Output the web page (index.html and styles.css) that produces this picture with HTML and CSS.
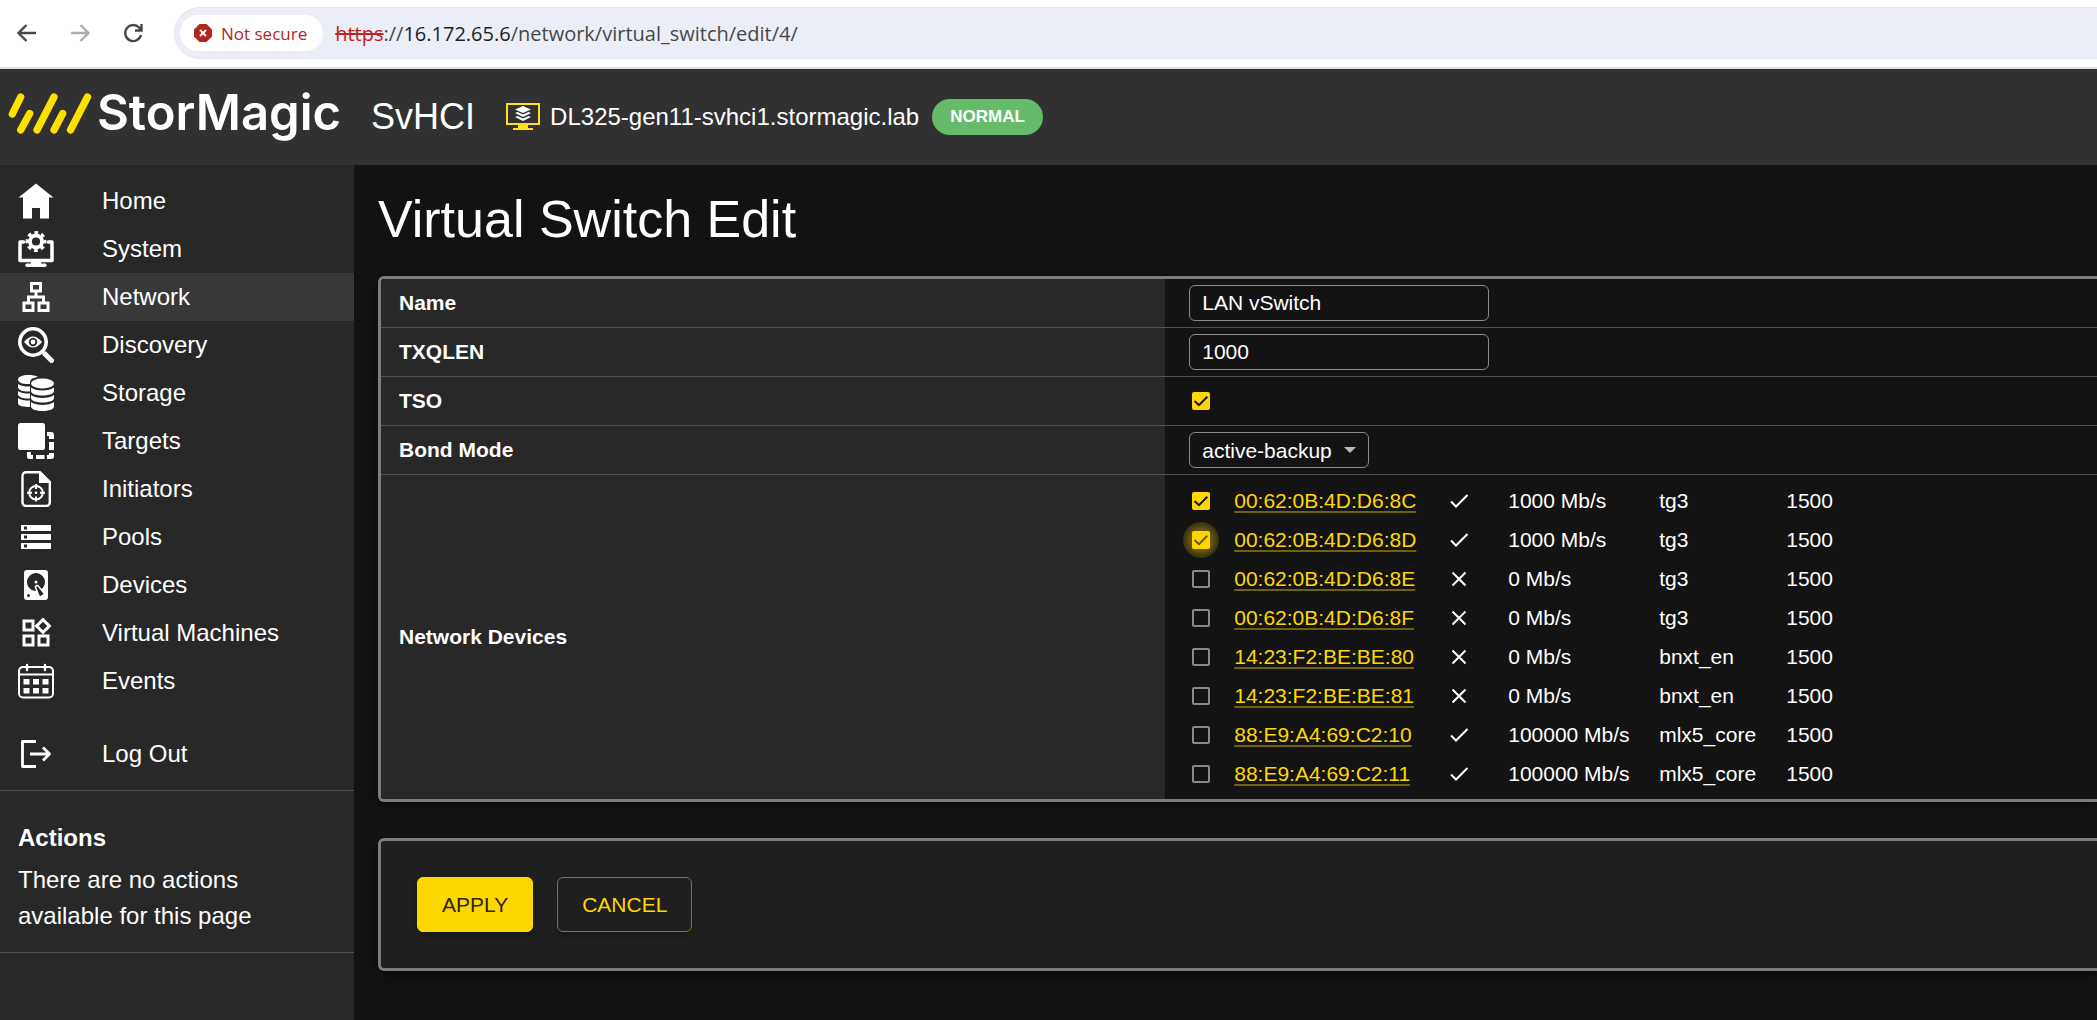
FILE: index.html
```html
<!DOCTYPE html>
<html lang="en">
<head>
<meta charset="utf-8">
<meta name="viewport" content="width=device-width, initial-scale=1">
<title>Virtual Switch Edit</title>
<link rel="stylesheet" href="styles.css">
</head>
<body>
<div class="toolbar">
  <button class="tool" type="button" aria-label="Back"><svg viewBox="0 0 24 24"><path d="M21 12H4M11.500 4L3.500 12l8 8"/></svg></button>
  <button class="tool tool-off" type="button" aria-label="Forward"><svg viewBox="0 0 24 24"><path d="M3 12h17M12.500 4l8 8-8 8"/></svg></button>
  <button class="tool" type="button" aria-label="Reload"><svg viewBox="0 0 24 24"><path d="M20 14a8 8 0 1 1-2-7.500l2.500 2.500M20.500 3v6.500H14"/></svg></button>
  <div class="omnibox">
    <button class="chip" type="button">
      <svg viewBox="0 0 18 18"><path fill="#b3261e" d="M5.500 0h7L18 5.500v7L12.500 18h-7L0 12.500v-7z"/><path stroke="#fff" stroke-width="2" d="M6 6l6 6M12 6l-6 6"/></svg>
      Not secure
    </button>
    <div class="url"><s>https</s>://<b>16.172.65.6</b>/network/virtual_switch/edit/4/</div>
  </div>
</div>

<header class="header">
  <div class="brand">
    <svg class="bars" viewBox="0 0 86 41"><path d="M12.700 4L4.300 21M21.700 20.500L12.700 37M46 4L29 37M54.700 20.500L46 37M79.500 4L62.500 37"/></svg>
    <span class="brand-name">StorMagic</span>
  </div>
  <span class="product">SvHCI</span>
  <div class="host">
    <svg class="host-icon" viewBox="0 0 36 30"><path fill="none" stroke="#ffe11a" stroke-width="2" d="M2 2h32v20H2z"/><path fill="#ffe11a" d="M13 22h10v4h5v2H8v-2h5z"/><path fill="#fff" d="M18 4l8 3.500-8 3.500-8-3.500zM10 11l2.500-1 5.500 2.500L23.500 10l2.500 1-8 4zM10 15l2.500-1 5.500 2.500 5.500-2.500 2.500 1-8 4z"/></svg>
    <span>DL325-gen11-svhci1.stormagic.lab</span>
    <span class="badge">NORMAL</span>
  </div>
</header>

<div class="layout">
  <aside class="sidebar">
    <nav class="nav">
      <a href="#"><svg viewBox="0 0 36 36"><path d="M18 .500L35.500 14.500H31v21h-9V25h-8v10.500H5v-21H.500z"/></svg>Home</a>
      <a href="#"><svg viewBox="0 0 36 36"><path class="line" stroke-width="3.500" stroke-linecap="round" stroke-linejoin="round" d="M5.500 11H2v18.500h32V11h-3.500"/><path d="M13 30h10v2.500h4a1.700 1.700 0 0 1 0 3.500H9a1.700 1.700 0 0 1 0-3.500h4z"/><circle class="line" cx="18" cy="10.500" r="6" stroke-width="3.800"/><circle class="line" cx="18" cy="10.500" r="8.500" stroke-width="4" stroke-dasharray="3.600 3.076" stroke-dashoffset="1.800"/></svg>System</a>
      <a href="#" class="active" aria-current="page"><svg viewBox="0 0 24 24"><path d="M13 22h8v-7h-3v-4h-5V9h3V2H8v7h3v2H6v4H3v7h8v-7H8v-2h8v2h-3zM10 7V4h4v3zM9 17v3H5v-3zM19 17v3h-4v-3z"/></svg>Network</a>
      <a href="#"><svg viewBox="0 0 36 36"><circle class="line" cx="15" cy="15" r="13.200" stroke-width="3.600"/><path class="line" stroke-width="5" stroke-linecap="round" d="M27 27l6.500 6.500"/><path fill-rule="evenodd" d="M6 15q9-11 18 0-9 11-18 0zM15 10.800a4.200 4.200 0 1 0 .1 0z"/><circle cx="15" cy="15" r="2.400"/></svg>Discovery</a>
      <a href="#"><svg viewBox="0 0 36 36"><path d="M0 4.500C0 1.500 5 0 10 0c4 0 8 .600 10 2-5 .500-8 2.500-8 5.500v1.500C6 9.500 0 8 0 4.500zM0 9c3 2 7 2.600 12 2.500v5C6 17 0 15 0 12.500zM0 16c3 2 7 2.600 12 2.500v5C6 24 0 22 0 19.500zM0 23c3 2 7 2.600 12 2.500v6.500C6 32 0 31 0 28.500z"/><ellipse cx="24.500" cy="8.500" rx="11.500" ry="5"/><path d="M13 12.500c5 4 18 4 23 0v3.500c0 6-23 6-23 0zM13 20c5 4 18 4 23 0v3c0 6-23 6-23 0zM13 27c5 4 18 4 23 0v4.500c0 6-23 6-23 0z"/></svg>Storage</a>
      <a href="#"><svg viewBox="0 0 36 36"><rect width="27" height="27" rx="2.500"/><path d="M29 9h4.500Q36 9 36 12v4h-5v-3h-2zM31 19h5v8h-5zM31 30h5v3.500Q36 36 33 36h-4v-4h2zM18 32h8.500v4H18zM9 29h4v3h2v4h-3.500Q9 36 9 33.500z"/></svg>Targets</a>
      <a href="#"><svg viewBox="0 0 36 36"><path class="line" stroke-width="2.400" d="M8 1.200h14L31.800 11v20.500a3.500 3.500 0 0 1-3.500 3.500H8a3.500 3.500 0 0 1-3.500-3.500V4.700A3.500 3.500 0 0 1 8 1.200z"/><path d="M21 1l11 11H21z"/><circle class="line" cx="18" cy="21.700" r="6.800" stroke-width="2"/><path class="line" stroke-width="2" d="M18 13v5M18 25.500v5M9 21.700h5M22 21.700h5"/><circle cx="18" cy="21.700" r="1.300"/></svg>Initiators</a>
      <a href="#"><svg viewBox="0 0 24 24"><path d="M2 20h20v-4H2zm2-3h2v2H4zM2 4v4h20V4zm4 3H4V5h2zm-4 7h20v-4H2zm2-3h2v2H4z"/></svg>Pools</a>
      <a href="#"><svg viewBox="0 0 24 24"><path d="M6,2H18A2,2 0 0,1 20,4V20A2,2 0 0,1 18,22H6A2,2 0 0,1 4,20V4A2,2 0 0,1 6,2M12,4A6,6 0 0,0 6,10C6,13.310 8.690,16 12.100,16L11.220,13.770C10.950,13.290 11.110,12.680 11.590,12.400L12.450,11.900C12.930,11.630 13.540,11.790 13.820,12.270L15.740,14.690C17.120,13.590 18,11.900 18,10A6,6 0 0,0 12,4M12,9A1,1 0 0,1 13,10A1,1 0 0,1 12,11A1,1 0 0,1 11,10A1,1 0 0,1 12,9M7,18A1,1 0 0,0 6,19A1,1 0 0,0 7,20A1,1 0 0,0 8,19A1,1 0 0,0 7,18M12.090,13.270L14.580,19.580L17.170,18.080L12.950,12.770L12.090,13.270Z"/></svg>Devices</a>
      <a href="#"><svg viewBox="0 0 24 24"><path d="M16.660 4.520l2.830 2.830-2.830 2.830-2.830-2.830 2.830-2.830M9 5v4H5V5h4m10 10v4h-4v-4h4M9 15v4H5v-4h4m7.660-13.310L11 7.340 16.660 13l5.660-5.660-5.660-5.650zM11 3H3v8h8V3zm10 10h-8v8h8v-8zm-10 0H3v8h8v-8z"/></svg>Virtual Machines</a>
      <a href="#"><svg viewBox="0 0 36 36"><rect class="line" x="1" y="4" width="34" height="30.500" rx="4" stroke-width="2"/><path class="line" stroke-width="2" d="M1 11.500h34"/><path class="line" stroke-width="2.400" stroke-linecap="round" d="M9 2v5M27 2v5"/><path d="M5.500 16h6v5.500h-6zM15 16h6v5.500h-6zM24.500 16h6v5.500h-6zM5.500 25h6v5.500h-6zM15 25h6v5.500h-6zM24.500 25h6v5.500h-6z"/></svg>Events</a>
      <a href="#" class="logout"><svg viewBox="0 0 36 36"><path class="line" stroke-width="2.800" stroke-linejoin="round" d="M18 5.500H4.500v25H18M12 18h19M25 11.500l6.500 6.500-6.500 6.500"/></svg>Log Out</a>
    </nav>
    <section class="actions">
      <h2>Actions</h2>
      <p>There are no actions available for this page</p>
    </section>
  </aside>

  <main class="main">
    <h1>Virtual Switch Edit</h1>
    <form>
      <div class="card">
        <table class="fields">
          <tr><th scope="row"><label for="name">Name</label></th><td><input class="field" id="name" type="text" value="LAN vSwitch"></td></tr>
          <tr><th scope="row"><label for="txqlen">TXQLEN</label></th><td><input class="field" id="txqlen" type="text" value="1000"></td></tr>
          <tr><th scope="row"><label for="tso">TSO</label></th><td><span class="tick"><input id="tso" type="checkbox" checked></span></td></tr>
          <tr><th scope="row"><label for="bond">Bond Mode</label></th><td><div class="select"><select id="bond"><option>active-backup</option></select><svg viewBox="0 0 12 6"><path d="M0 0h12L6 6z"/></svg></div></td></tr>
          <tr><th scope="row">Network Devices</th><td>
            <table class="devices">
              <tr><td><span class="tick"><input type="checkbox" aria-label="00:62:0B:4D:D6:8C" checked></span></td><td><a href="#">00:62:0B:4D:D6:8C</a></td><td><svg viewBox="0 0 24 24"><path d="M4 12.500l5 5L20.500 6"/></svg></td><td>1000 Mb/s</td><td>tg3</td><td>1500</td></tr>
              <tr><td><span class="tick tick-focus"><input type="checkbox" aria-label="00:62:0B:4D:D6:8D" checked></span></td><td><a href="#">00:62:0B:4D:D6:8D</a></td><td><svg viewBox="0 0 24 24"><path d="M4 12.500l5 5L20.500 6"/></svg></td><td>1000 Mb/s</td><td>tg3</td><td>1500</td></tr>
              <tr><td><span class="tick"><input type="checkbox" aria-label="00:62:0B:4D:D6:8E"></span></td><td><a href="#">00:62:0B:4D:D6:8E</a></td><td><svg viewBox="0 0 24 24"><path d="M5.500 5.500l13 13M18.500 5.500l-13 13"/></svg></td><td>0 Mb/s</td><td>tg3</td><td>1500</td></tr>
              <tr><td><span class="tick"><input type="checkbox" aria-label="00:62:0B:4D:D6:8F"></span></td><td><a href="#">00:62:0B:4D:D6:8F</a></td><td><svg viewBox="0 0 24 24"><path d="M5.500 5.500l13 13M18.500 5.500l-13 13"/></svg></td><td>0 Mb/s</td><td>tg3</td><td>1500</td></tr>
              <tr><td><span class="tick"><input type="checkbox" aria-label="14:23:F2:BE:BE:80"></span></td><td><a href="#">14:23:F2:BE:BE:80</a></td><td><svg viewBox="0 0 24 24"><path d="M5.500 5.500l13 13M18.500 5.500l-13 13"/></svg></td><td>0 Mb/s</td><td>bnxt_en</td><td>1500</td></tr>
              <tr><td><span class="tick"><input type="checkbox" aria-label="14:23:F2:BE:BE:81"></span></td><td><a href="#">14:23:F2:BE:BE:81</a></td><td><svg viewBox="0 0 24 24"><path d="M5.500 5.500l13 13M18.500 5.500l-13 13"/></svg></td><td>0 Mb/s</td><td>bnxt_en</td><td>1500</td></tr>
              <tr><td><span class="tick"><input type="checkbox" aria-label="88:E9:A4:69:C2:10"></span></td><td><a href="#">88:E9:A4:69:C2:10</a></td><td><svg viewBox="0 0 24 24"><path d="M4 12.500l5 5L20.500 6"/></svg></td><td>100000 Mb/s</td><td>mlx5_core</td><td>1500</td></tr>
              <tr><td><span class="tick"><input type="checkbox" aria-label="88:E9:A4:69:C2:11"></span></td><td><a href="#">88:E9:A4:69:C2:11</a></td><td><svg viewBox="0 0 24 24"><path d="M4 12.500l5 5L20.500 6"/></svg></td><td>100000 Mb/s</td><td>mlx5_core</td><td>1500</td></tr>
            </table>
          </td></tr>
        </table>
      </div>
      <div class="card buttons">
        <button class="btn btn-primary" type="submit">APPLY</button>
        <button class="btn" type="button">CANCEL</button>
      </div>
    </form>
  </main>
</div>
</body>
</html>
```
FILE: styles.css
```css
* {
  box-sizing: border-box;
}

body {
  margin: 0;
  min-height: 100vh;
  display: flex;
  flex-direction: column;
  background: #121212;
  color: #fff;
  font-family: "Liberation Sans", Arial, sans-serif;
  font-size: 24px;
  overflow-x: hidden;
}

button,
input,
select {
  font: inherit;
  color: inherit;
}

/* Browser toolbar */
.toolbar {
  display: flex;
  align-items: center;
  gap: 29px;
  padding: 7px 0 8px 15px;
  background: #fff;
  border-bottom: 2px solid #dedede;
}

.tool {
  width: 24px;
  height: 24px;
  padding: 0;
  border: 0;
  background: none;
  color: #474747;
}

.tool svg {
  display: block;
  fill: none;
  stroke: currentColor;
  stroke-width: 2.4;
}

.tool-off {
  color: #ababab;
}

.omnibox {
  flex: 1;
  display: flex;
  align-items: center;
  gap: 12px;
  height: 52px;
  padding-left: 5px;
  background: #ebeef7;
  border: 1px solid #e6e6ee;
  border-right: 0;
  border-radius: 26px 0 0 26px;
}

.chip {
  display: flex;
  align-items: center;
  gap: 9px;
  height: 36px;
  padding: 0 16px 0 14px;
  border: 0;
  border-radius: 18px;
  background: #fff;
  color: #b3261e;
  font: 17px "Open Sans", sans-serif;
}

.chip svg {
  width: 18px;
  height: 18px;
}

.url {
  color: #474747;
  font: 20px "Open Sans", sans-serif;
}

.url s {
  color: #c5221f;
}

.url b {
  color: #1f1f1f;
  font-weight: 400;
}

/* Application header */
.header {
  display: flex;
  align-items: center;
  height: 96px;
  padding-left: 8px;
  gap: 30px;
  background: #313131;
}

.brand {
  display: flex;
  align-items: center;
  gap: 3px;
  padding-bottom: 8px;
}

.bars {
  width: 86px;
  height: 41px;
  fill: none;
  stroke: #ffe100;
  stroke-width: 7.300;
  stroke-linecap: round;
}

.brand-name {
  font: 600 49px/60px Inter, sans-serif;
}

.product {
  font-size: 36px;
}

.host {
  display: flex;
  align-items: center;
  gap: 9px;
}

.host-icon {
  width: 36px;
  height: 30px;
}

.badge {
  margin-left: 4px;
  padding: 0 18px;
  border-radius: 18px;
  background: #66bb6a;
  font-size: 17px;
  font-weight: 700;
  line-height: 36px;
}

/* Sidebar */
.layout {
  flex: 1;
  display: flex;
}

.sidebar {
  flex: none;
  width: 354px;
  background: #282828;
}

.nav {
  display: flex;
  flex-direction: column;
  padding: 12px 0;
  border-bottom: 1px solid #515151;
}

.nav a {
  display: flex;
  align-items: center;
  gap: 48px;
  height: 48px;
  padding-left: 18px;
  color: #fff;
  text-decoration: none;
}

.nav a.active {
  background: #383838;
}

.nav a.logout {
  margin-top: 25px;
}

.nav svg {
  width: 36px;
  height: 36px;
  fill: #fff;
}

.nav .line {
  fill: none;
  stroke: #fff;
}

.actions {
  padding: 29px 60px 18px 18px;
  border-bottom: 1px solid #515151;
  line-height: 36px;
}

.actions h2 {
  margin: 0 0 6px;
  font-size: 24px;
}

.actions p {
  margin: 0;
}

/* Content */
.main {
  flex: 1;
  min-width: 0;
  padding: 24px 0 48px 24px;
}

h1 {
  margin: 0 0 27px;
  font-size: 52px;
  font-weight: 400;
  line-height: 60px;
}

.card {
  border: 3px solid #7c7c7c;
  border-right: 0;
  border-radius: 6px 0 0 6px;
  background: #131313;
  box-shadow: 0 3px 6px rgba(0, 0, 0, 0.5);
  overflow: hidden;
}

.fields {
  width: 100%;
  border-spacing: 0;
  font-size: 21px;
}

.fields > tbody > tr:not(:last-child) > * {
  border-bottom: 1px solid #515151;
}

.fields th {
  width: 45.7%;
  height: 49px;
  padding: 0 18px;
  background: #282828;
  text-align: left;
}

.fields td {
  padding: 0 24px;
}

.field {
  display: block;
  width: 300px;
  height: 36px;
  padding: 0 12px;
  border: 1px solid #8a8a8a;
  border-radius: 6px;
  background: transparent;
}

.select {
  display: grid;
  align-items: center;
  width: 180px;
}

.select select,
.select svg {
  grid-area: 1 / 1;
}

.select select {
  appearance: none;
  height: 36px;
  padding: 0 12px;
  border: 1px solid #8a8a8a;
  border-radius: 6px;
  background: transparent;
}

.select svg {
  justify-self: end;
  width: 12px;
  height: 6px;
  margin-right: 13px;
  fill: #b9b9b9;
  pointer-events: none;
}

.tick {
  position: relative;
  display: grid;
  place-items: center;
  width: 24px;
  height: 24px;
}

.tick input {
  appearance: none;
  width: 18px;
  height: 18px;
  margin: 0;
  border: 2px solid #8a8a8a;
  border-radius: 2px;
}

.tick input:checked {
  border: 0;
  background: #ffd700 url("data:image/svg+xml,%3Csvg xmlns='http://www.w3.org/2000/svg' viewBox='0 0 18 18'%3E%3Cpath d='M2.500 9l4.500 4.200L15.300 4.800' fill='none' stroke='%23131313' stroke-width='2'/%3E%3C/svg%3E");
}

.tick-focus::after {
  content: "";
  position: absolute;
  inset: -6px;
  border-radius: 50%;
  background: radial-gradient(closest-side, rgba(255, 215, 0, 0.35) 60%, rgba(255, 215, 0, 0.15));
  pointer-events: none;
}

.devices {
  border-collapse: collapse;
  margin: 6px 0;
}

.devices td {
  height: 39px;
  padding: 0;
  white-space: nowrap;
}

.devices td:nth-child(1) {
  width: 45px;
}

.devices td:nth-child(2) {
  width: 213px;
}

.devices td:nth-child(3) {
  width: 61px;
}

.devices td:nth-child(4) {
  width: 151px;
}

.devices td:nth-child(5) {
  width: 127px;
}

.devices a {
  color: #ffd700;
  text-decoration: underline 2px rgba(255, 215, 0, 0.4);
  text-decoration-skip-ink: none;
  text-underline-offset: 3px;
}

.devices svg {
  display: block;
  width: 24px;
  height: 24px;
  fill: none;
  stroke: #fff;
  stroke-width: 2;
}

.buttons {
  display: flex;
  gap: 24px;
  margin-top: 36px;
  padding: 36px;
  background: #1f1f1f;
}

.btn {
  height: 55px;
  padding: 0 24px;
  border: 1px solid #8a770f;
  border-radius: 6px;
  background: transparent;
  color: #ffd700;
  font-size: 21px;
  box-shadow: 0 3px 6px rgba(0, 0, 0, 0.25);
}

.btn-primary {
  border-color: #ffd700;
  background: #ffd700;
  color: #2b2606;
}
```
